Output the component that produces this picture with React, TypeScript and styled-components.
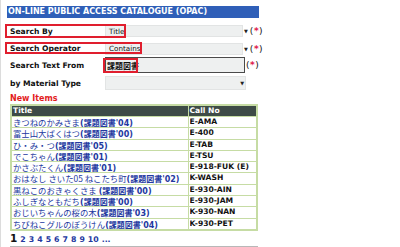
import React from "react";
import styled, { createGlobalStyle } from "styled-components";

const Global = createGlobalStyle`
  html, body { margin: 0; padding: 0; background: #fff; }
  body { font-family: "DejaVu Sans", Verdana, "Noto Sans CJK JP", sans-serif; }
`;

const Page = styled.div`
  width: 400px;
  height: 247px;
  box-sizing: border-box;
  padding: 6px 0 0 6px;
  border-left: 1px solid #dcdcdc;
  overflow: hidden;
  position: relative;
`;

const Header = styled.div`
  width: 251px;
  height: 12px;
  background: #2f5fb8;
  color: #fff;
  font-weight: bold;
  font-size: 8px;
  line-height: 12px;
  padding-left: 1px;
  white-space: nowrap;
  overflow: hidden;
`;

const Form = styled.div`
  display: flex;
  flex-direction: column;
`;

const Row = styled.div<{ $top: number; $h: number }>`
  position: relative;
  display: flex;
  align-items: center;
  margin-top: ${(p) => p.$top}px;
  height: ${(p) => p.$h}px;
`;

const Label = styled.div`
  width: 95px;
  padding-left: 3px;
  font-weight: bold;
  font-size: 7.6px;
  color: #111;
  white-space: nowrap;
`;

const SelectBox = styled.div<{ $w: number; $h: number }>`
  width: ${(p) => p.$w}px;
  height: ${(p) => p.$h}px;
  box-sizing: border-box;
  background: #eef0f0;
  border: 1px solid #e2e4e4;
  display: flex;
  align-items: center;
  font-size: 7.2px;
  color: #111;
  padding-left: 3px;
  white-space: nowrap;
`;

const Arrow = styled.span`
  font-size: 5px;
  color: #222;
  margin: 0 1px 0 1px;
`;

const TextInput = styled.div`
  width: 140px;
  height: 16px;
  box-sizing: border-box;
  background: #eef0f0;
  border: 1px solid #4a4a4a;
  display: flex;
  align-items: center;
  padding-left: 1px;
  font-size: 8px;
  font-family: "Noto Sans CJK JP", sans-serif;
  font-weight: bold;
  color: #111;
`;

const Required = styled.span`
  font-size: 9px;
  color: #111;
  margin-left: 1px;
  letter-spacing: 0.5px;
  & b { color: #e0204a; font-weight: bold; }
`;

const Mark = styled.div<{ $l: number; $t: number; $w: number; $h: number }>`
  position: absolute;
  left: ${(p) => p.$l}px;
  top: ${(p) => p.$t}px;
  width: ${(p) => p.$w}px;
  height: ${(p) => p.$h}px;
  box-sizing: border-box;
  border: 2px solid #e01e2e;
  pointer-events: none;
`;

const Section = styled.div`
  margin-top: 3px;
  height: 11px;
  padding-left: 3px;
  color: #e31c1c;
  font-weight: bold;
  font-size: 8px;
  line-height: 11px;
`;

const Table = styled.table`
  margin-top: 0;
  margin-left: 3px;
  width: 248px;
  border-collapse: collapse;
  border: 2px solid #c6dca4;
  table-layout: fixed;
`;

const Th = styled.th`
  background: #3e4b47;
  color: #fff;
  text-align: left;
  font-weight: bold;
  font-size: 7.6px;
  height: 10px;
  line-height: 10px;
  padding: 0 1px;
  border: 1px solid #c6dca4;
`;

const Td = styled.td`
  padding: 0 1px;
  border: 1px solid #c6dca4;
`;

const Cell = styled.div<{ $link?: boolean }>`
  height: 10.3px;
  line-height: 10.3px;
  overflow: hidden;
  white-space: nowrap;
  color: ${(p) => (p.$link ? "#2338a0" : "#111")};
  font-weight: bold;
  font-size: ${(p) => (p.$link ? "8px" : "7.6px")};
`;

const Kana = styled.span`
  font-family: "Noto Sans CJK JP", sans-serif;
  font-weight: normal;
  font-size: 8.4px;
`;

const Tag = styled.span`
  font-family: "DejaVu Sans", "Noto Sans CJK JP", sans-serif;
`;

const Pager = styled.div`
  margin-top: 1px;
  padding-left: 3px;
  height: 12px;
  display: flex;
  align-items: baseline;
  gap: 3px;
  font-weight: bold;
  font-size: 7.8px;
  color: #2338a0;
  white-space: nowrap;
`;

const Current = styled.span`
  color: #111;
  font-size: 10.5px;
`;

const Rule = styled.div`
  margin-top: 2px;
  margin-left: 3px;
  width: 248px;
  height: 1px;
  background: #b8b8b8;
`;

const rows: { name: string; tag: string; call: string }[] = [
  { name: "きつねのかみさま", tag: "(課題図書'04)", call: "E-AMA" },
  { name: "富士山大ばくはつ", tag: "(課題図書'00)", call: "E-400" },
  { name: "ひ・み・つ", tag: "(課題図書'05)", call: "E-TAB" },
  { name: "でこちゃん", tag: "(課題図書'01)", call: "E-TSU" },
  { name: "かさぶたくん", tag: "(課題図書'01)", call: "E-918-FUK (E)" },
  { name: "おはなし さいた05 ねこたち町", tag: "(課題図書'02)", call: "K-WASH" },
  { name: "黒ねこのおきゃくさま\u00a0", tag: "(課題図書'00)", call: "E-930-AIN" },
  { name: "ふしぎなともだち", tag: "(課題図書'00)", call: "E-930-JAM" },
  { name: "おじいちゃんの桜の木", tag: "(課題図書'03)", call: "K-930-NAN" },
  { name: "ちびねこグルのぼうけん", tag: "(課題図書'04)", call: "K-930-PET" },
];

export default function App() {
  return (
    <>
      <Global />
      <Page>
        <Header>ON-LINE PUBLIC ACCESS CATALOGUE (OPAC)</Header>
        <Form>
          <Row $top={6} $h={14}>
            <Label>Search By</Label>
            <SelectBox $w={138} $h={12}>Title</SelectBox>
            <Arrow>▼</Arrow>
            <Required>
              (<b>*</b>)
            </Required>
            <Mark $l={-2} $t={0} $w={121} $h={14} />
          </Row>
          <Row $top={4} $h={13}>
            <Label>Search Operator</Label>
            <SelectBox $w={138} $h={12}>Contains</SelectBox>
            <Arrow>▼</Arrow>
            <Required>
              (<b>*</b>)
            </Required>
            <Mark $l={-2} $t={0} $w={137} $h={12} />
          </Row>
          <Row $top={2} $h={16}>
            <Label>Search Text From</Label>
            <TextInput>課題図書</TextInput>
            <Required>
              (<b>*</b>)
            </Required>
            <Mark $l={96} $t={1} $w={35} $h={15} />
          </Row>
          <Row $top={3} $h={14}>
            <Label>by Material Type</Label>
            <SelectBox $w={141} $h={14}>
              <span style={{ flex: 1 }} />
              <Arrow>▼</Arrow>
            </SelectBox>
          </Row>
        </Form>
        <Section>New Items</Section>
        <Table>
          <colgroup>
            <col style={{ width: "177px" }} />
            <col />
          </colgroup>
          <thead>
            <tr>
              <Th>Title</Th>
              <Th>Call No</Th>
            </tr>
          </thead>
          <tbody>
            {rows.map((r) => (
              <tr key={r.name}>
                <Td>
                  <Cell $link>
                    <Kana>{r.name}</Kana>
                    <Tag>{r.tag}</Tag>
                  </Cell>
                </Td>
                <Td>
                  <Cell>{r.call}</Cell>
                </Td>
              </tr>
            ))}
          </tbody>
        </Table>
        <Pager>
          <Current>1</Current>
          {["2", "3", "4", "5", "6", "7", "8", "9", "10", "..."].map((n) => (
            <span key={n}>{n}</span>
          ))}
        </Pager>
        <Rule />
      </Page>
    </>
  );
}
